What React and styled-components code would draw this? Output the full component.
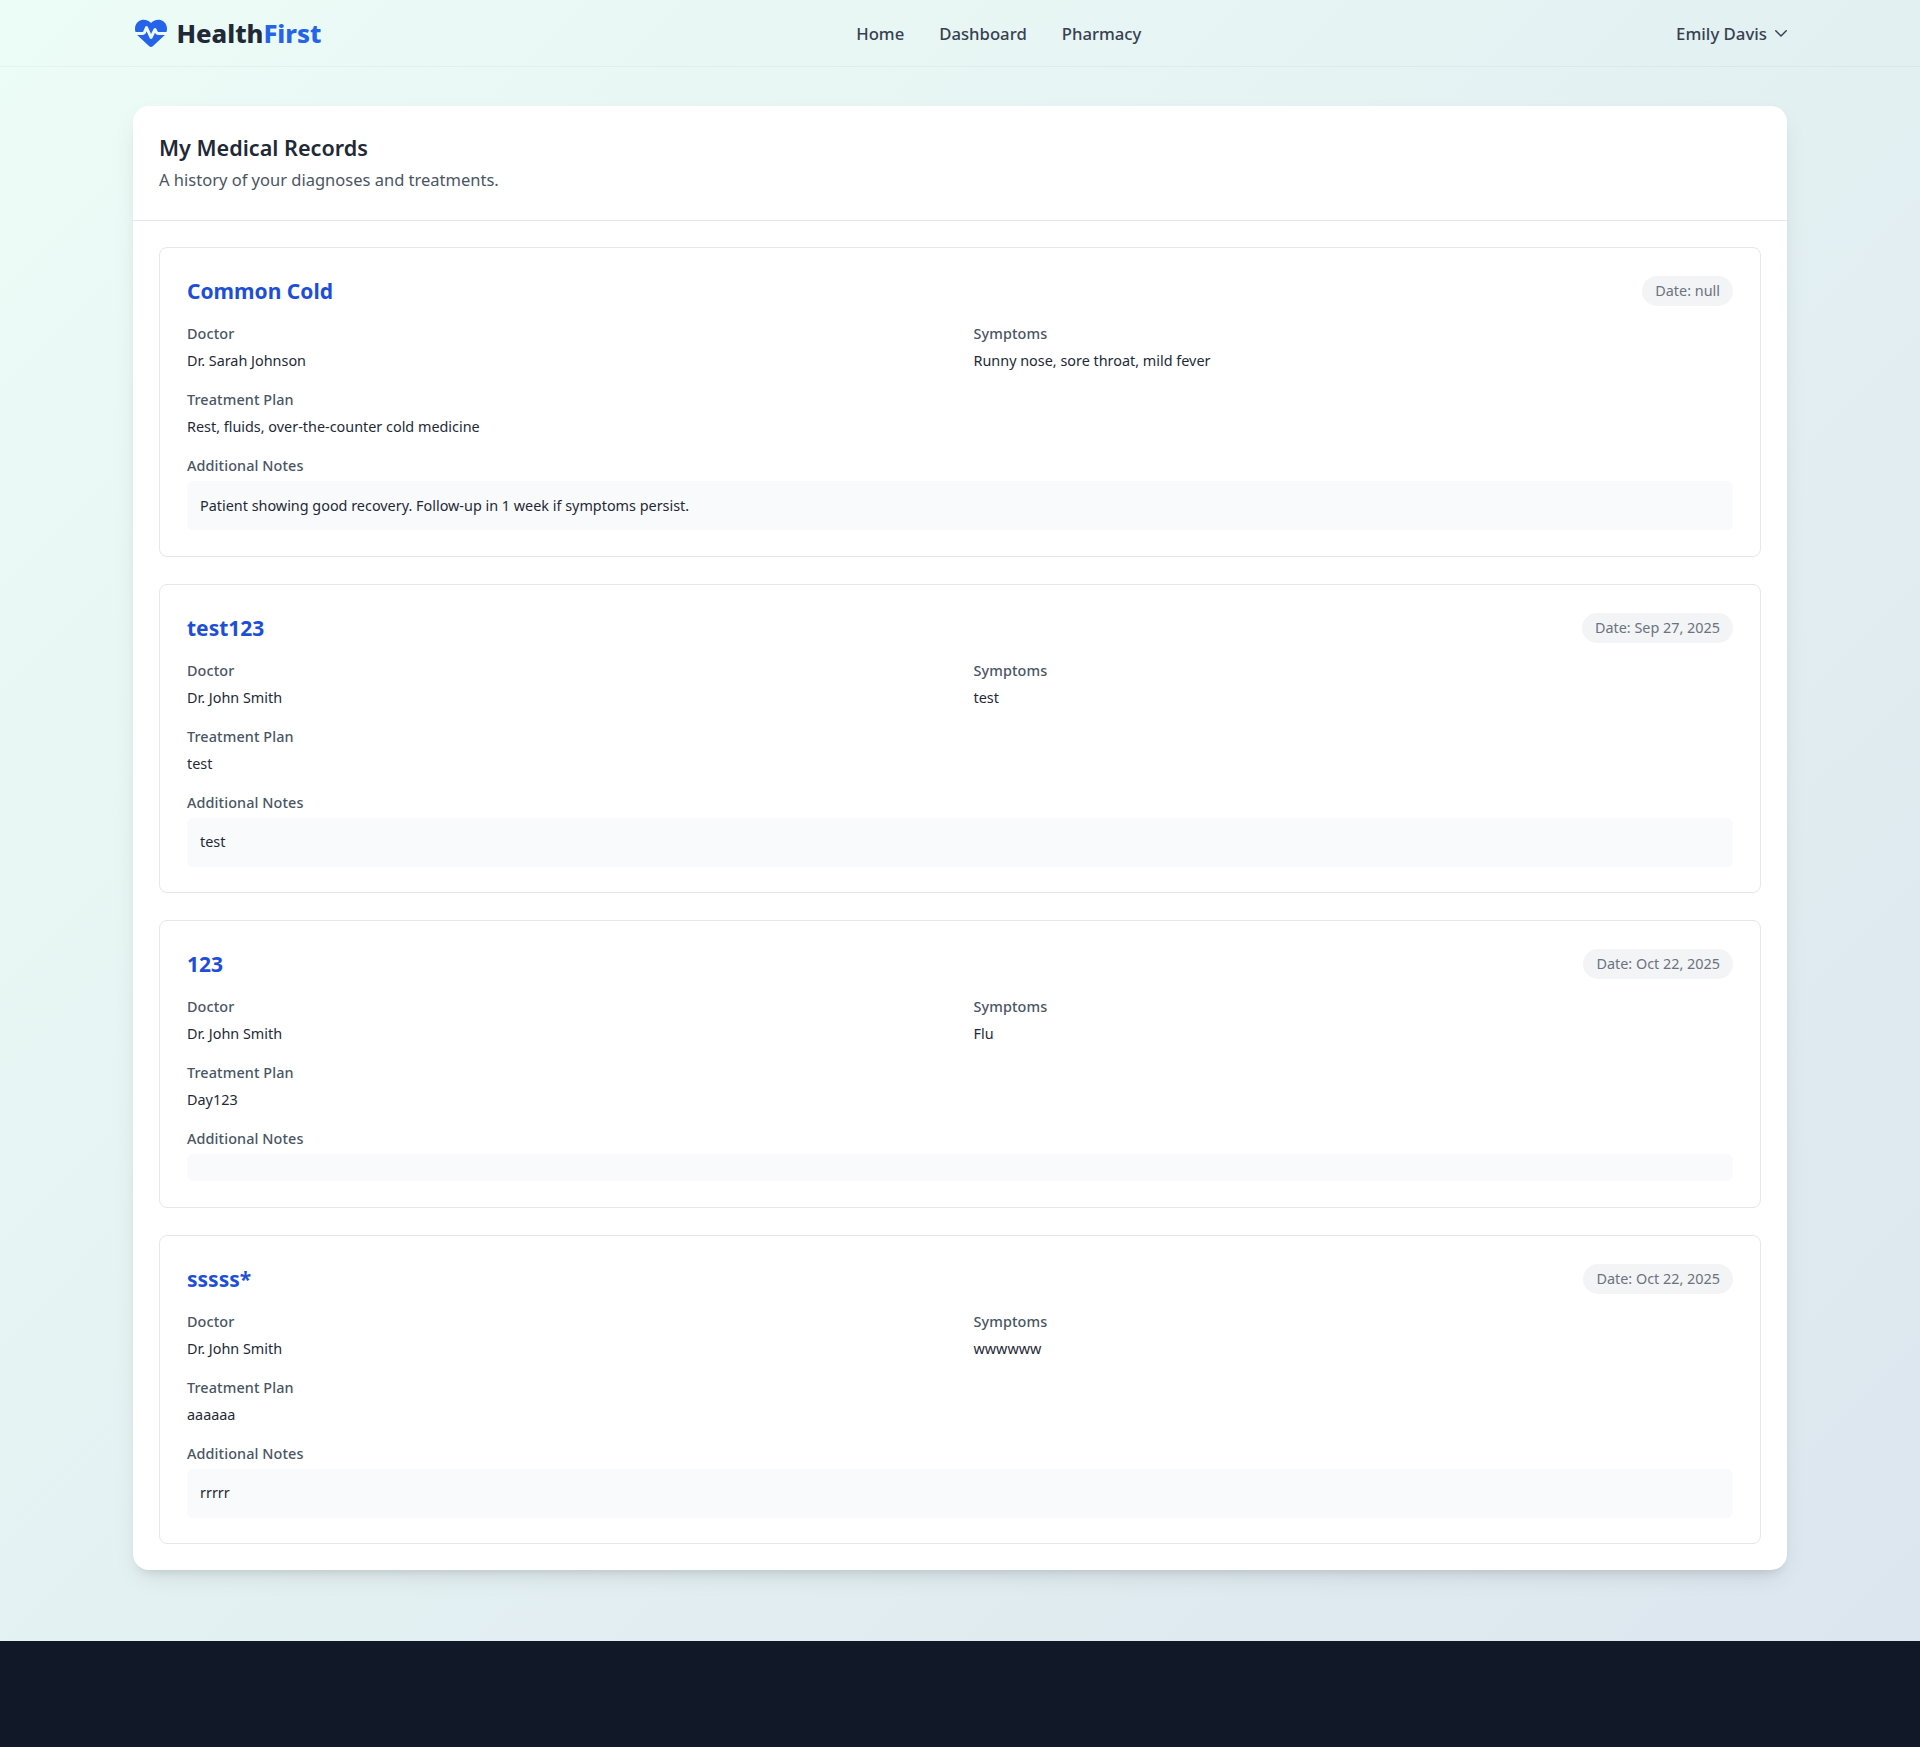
import React from "react";
import styled, { createGlobalStyle } from "styled-components";
import { FaHeartPulse } from "react-icons/fa6";

const Global = createGlobalStyle`
  * { box-sizing: border-box; }
  html, body { margin: 0; padding: 0; }
  body {
    font-family: "Noto Sans", "Open Sans", sans-serif;
    color: #1f2937;
  }
`;

const Page = styled.div`
  min-height: 1747px;
  display: flex;
  flex-direction: column;
  background: linear-gradient(135deg, #ecfcf6 0%, #dbe5ee 100%);
`;

const Header = styled.header`
  height: 67px;
  padding: 0 130px 0 133px;
  display: flex;
  justify-content: space-between;
  align-items: center;
  border-bottom: 1px solid rgba(0, 0, 0, 0.03);
`;

const Logo = styled.div`
  display: flex;
  align-items: center;
  gap: 10px;
  font-size: 25.6px;
  font-weight: 800;
  color: #1f2937;
`;

const LogoIcon = styled(FaHeartPulse)`
  margin-left: 1.5px;
  color: #2563eb;
  font-size: 32px;
`;

const Accent = styled.span`
  color: #2563eb;
`;

const Nav = styled.nav`
  display: flex;
  gap: 35px;
`;

const NavLink = styled.a`
  font-size: 16.7px;
  font-weight: 500;
  color: #374151;
`;

const User = styled.div`
  display: flex;
  align-items: center;
  gap: 5px;
  font-size: 16.8px;
  font-weight: 500;
  color: #374151;
`;

const Main = styled.main`
  flex: 1;
  padding: 39px 133px 70px;
`;

const Panel = styled.section`
  background: #fff;
  border-radius: 16px;
  box-shadow: 0 10px 25px -5px rgba(0, 0, 0, 0.1), 0 8px 10px -6px rgba(0, 0, 0, 0.1);
`;

const PanelHead = styled.div`
  height: 115px;
  padding: 27px 26px 0;
  border-bottom: 1px solid #e5e7eb;
`;

const Title = styled.h1`
  margin: 0;
  font-size: 21.6px;
  line-height: 30px;
  font-weight: 600;
  color: #1f2937;
`;

const Subtitle = styled.p`
  margin: 5px 0 0;
  font-size: 16.5px;
  line-height: 24px;
  color: #4b5563;
`;

const List = styled.div`
  padding: 26px;
  display: flex;
  flex-direction: column;
  gap: 27px;
`;

const Record = styled.article`
  border: 1px solid #e5e7eb;
  border-radius: 8px;
  padding: 27px 27px 25.6px;
`;

const RecordHead = styled.div`
  display: flex;
  justify-content: space-between;
  align-items: center;
  height: 32px;
  margin-bottom: 17px;
`;

const Diagnosis = styled.h2`
  margin: 0;
  font-size: 21px;
  line-height: 32px;
  font-weight: 700;
  color: #1d4ed8;
`;

const DateBadge = styled.span`
  font-size: 14.4px;
  line-height: 20px;
  color: #6b7280;
  background: #f3f4f6;
  border-radius: 999px;
  padding: 5px 13px;
`;

const Fields = styled.div`
  display: grid;
  grid-template-columns: 1fr 1fr;
  column-gap: 27px;
`;

const Field = styled.div`
  margin-bottom: 19px;
`;

const Label = styled.div`
  font-size: 14.4px;
  line-height: 20px;
  font-weight: 500;
  letter-spacing: 0.1px;
  color: #4b5563;
  margin-bottom: 5px;
`;

const Value = styled.div`
  margin-top: 7px;
  font-size: 14.4px;
  line-height: 20px;
  color: #1f2937;
`;

const Notes = styled.div`
  background: #f9fafb;
  border-radius: 6px;
  padding: 13.5px 13px;
  min-height: 27px;
  font-size: 14.4px;
  line-height: 22px;
  color: #1f2937;
`;

const Footer = styled.footer`
  height: 106px;
  background: #111827;
`;

const records = [
  { name: "Common Cold", date: "null", doctor: "Dr. Sarah Johnson", symptoms: "Runny nose, sore throat, mild fever", plan: "Rest, fluids, over-the-counter cold medicine", notes: "Patient showing good recovery. Follow-up in 1 week if symptoms persist." },
  { name: "test123", date: "Sep 27, 2025", doctor: "Dr. John Smith", symptoms: "test", plan: "test", notes: "test" },
  { name: "123", date: "Oct 22, 2025", doctor: "Dr. John Smith", symptoms: "Flu", plan: "Day123", notes: "" },
  { name: "sssss*", date: "Oct 22, 2025", doctor: "Dr. John Smith", symptoms: "wwwwww", plan: "aaaaaa", notes: "rrrrr" },
];

function Chevron() {
  return (
    <svg width="18" height="18" viewBox="0 0 24 24" fill="none" stroke="currentColor" strokeWidth="2" strokeLinecap="round" strokeLinejoin="round">
      <path d="M19 9l-7 7-7-7" />
    </svg>
  );
}

export default function App() {
  return (
    <Page>
      <Global />
      <Header>
        <Logo>
          <LogoIcon />
          <span>Health<Accent>First</Accent></span>
        </Logo>
        <Nav>
          <NavLink>Home</NavLink>
          <NavLink>Dashboard</NavLink>
          <NavLink>Pharmacy</NavLink>
        </Nav>
        <User>
          Emily Davis
          <Chevron />
        </User>
      </Header>
      <Main>
        <Panel>
          <PanelHead>
            <Title>My Medical Records</Title>
            <Subtitle>A history of your diagnoses and treatments.</Subtitle>
          </PanelHead>
          <List>
            {records.map((r) => (
              <Record key={r.name}>
                <RecordHead>
                  <Diagnosis>{r.name}</Diagnosis>
                  <DateBadge>Date: {r.date}</DateBadge>
                </RecordHead>
                <Fields>
                  <Field>
                    <Label>Doctor</Label>
                    <Value>{r.doctor}</Value>
                  </Field>
                  <Field>
                    <Label>Symptoms</Label>
                    <Value>{r.symptoms}</Value>
                  </Field>
                </Fields>
                <Field>
                  <Label>Treatment Plan</Label>
                  <Value>{r.plan}</Value>
                </Field>
                <Label>Additional Notes</Label>
                <Notes>{r.notes}</Notes>
              </Record>
            ))}
          </List>
        </Panel>
      </Main>
      <Footer />
    </Page>
  );
}
